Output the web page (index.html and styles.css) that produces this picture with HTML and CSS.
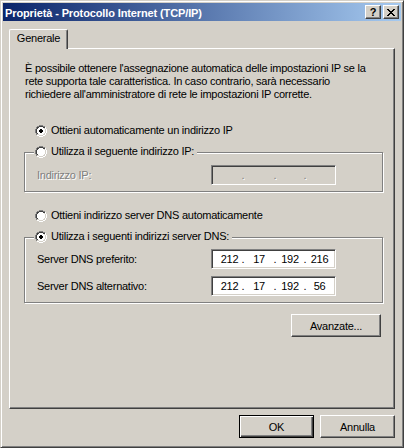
FILE: index.html
```html
<!DOCTYPE html>
<html lang="it">
<head>
<meta charset="utf-8">
<title>Proprietà - Protocollo Internet (TCP/IP)</title>
<link rel="stylesheet" href="styles.css">
</head>
<body>
<svg class="defs" aria-hidden="true">
  <defs>
    <symbol id="radio" viewBox="0 0 12 12">
      <path fill="#808080" d="M4 0h4v1H4z M2 1h2v1H2z M8 1h2v1H8z M1 2h1v2H1z M0 4h1v4H0z M1 8h1v2H1z"/>
      <path fill="#404040" d="M4 1h4v1H4z M2 2h2v1H2z M8 2h2v1H8z M2 3h1v1H2z M1 4h1v4H1z M2 8h1v1H2z"/>
      <path fill="#ffffff" d="M10 2h1v2h-1z M11 4h1v4h-1z M10 8h1v2h-1z M2 10h2v1H2z M8 10h2v1H8z M4 11h4v1H4z"/>
      <path fill="#d4d0c8" d="M9 3h1v1H9z M10 4h1v4h-1z M9 8h1v1H9z M2 9h2v1H2z M8 9h2v1H8z M4 10h4v1H4z"/>
      <path fill="#ffffff" d="M4 2h4v1H4z M3 3h6v1H3z M2 4h8v4H2z M3 8h6v1H3z M4 9h4v1H4z"/>
    </symbol>
    <symbol id="dot" viewBox="0 0 12 12">
      <path fill="#000000" d="M5 4h2v1H5z M4 5h4v2H4z M5 7h2v1H5z"/>
    </symbol>
  </defs>
</svg>
<div class="window">
  <div class="titlebar">
    <span class="title">Proprietà - Protocollo Internet (TCP/IP)</span>
    <div class="caption-buttons">
      <span class="cap-btn help">?</span>
      <span class="cap-btn close">
        <svg width="8" height="7" viewBox="0 0 8 7" shape-rendering="crispEdges">
          <path fill="#000" d="M0 0h2v1H0z M6 0h2v1H6z M1 1h2v1H1z M5 1h2v1H5z M2 2h4v1H2z M3 3h2v1H3z M2 4h4v1H2z M1 5h2v1H1z M5 5h2v1H5z M0 6h2v1H0z M6 6h2v1H6z"/>
        </svg>
      </span>
    </div>
  </div>
  <div class="client">
    <div class="tabs"><div class="tab">Generale</div></div>
    <div class="panel">
      <p class="intro">È possibile ottenere l'assegnazione automatica delle impostazioni IP se la<br>rete supporta tale caratteristica. In caso contrario, sarà necessario<br>richiedere all'amministratore di rete le impostazioni IP corrette.</p>

      <div class="radio r1">
        <svg class="radio-icon" viewBox="0 0 12 12" shape-rendering="crispEdges"><use href="#radio"/><use href="#dot"/></svg>
        <span>Ottieni automaticamente un indirizzo IP</span>
      </div>

      <div class="group g1">
        <div class="legend radio">
          <svg class="radio-icon" viewBox="0 0 12 12" shape-rendering="crispEdges"><use href="#radio"/></svg>
          <span>Utilizza il seguente indirizzo IP:</span>
        </div>
        <div class="field-row first">
          <span class="label disabled">Indirizzo IP:</span>
          <div class="ip ip-disabled">
            <span class="oct"></span><span class="sep">.</span><span class="oct"></span><span class="sep">.</span><span class="oct"></span><span class="sep">.</span><span class="oct"></span>
          </div>
        </div>
      </div>

      <div class="radio r3">
        <svg class="radio-icon" viewBox="0 0 12 12" shape-rendering="crispEdges"><use href="#radio"/></svg>
        <span>Ottieni indirizzo server DNS automaticamente</span>
      </div>

      <div class="group g2">
        <div class="legend radio">
          <svg class="radio-icon" viewBox="0 0 12 12" shape-rendering="crispEdges"><use href="#radio"/><use href="#dot"/></svg>
          <span>Utilizza i seguenti indirizzi server DNS:</span>
        </div>
        <div class="field-row first">
          <span class="label">Server DNS preferito:</span>
          <div class="ip">
            <span class="oct">212</span><span class="sep">.</span><span class="oct">17</span><span class="sep">.</span><span class="oct">192</span><span class="sep">.</span><span class="oct">216</span>
          </div>
        </div>
        <div class="field-row second">
          <span class="label">Server DNS alternativo:</span>
          <div class="ip">
            <span class="oct">212</span><span class="sep">.</span><span class="oct">17</span><span class="sep">.</span><span class="oct">192</span><span class="sep">.</span><span class="oct">56</span>
          </div>
        </div>
      </div>

      <div class="adv-row">
        <button class="btn adv">Avanzate...</button>
      </div>
    </div>
    <div class="buttons">
      <button class="btn default">OK</button>
      <button class="btn">Annulla</button>
    </div>
  </div>
</div>
</body>
</html>
```

FILE: styles.css
```css
* { box-sizing: border-box; }
html, body { margin: 0; padding: 0; }
body {
  background: #d4d0c8;
  font-family: "Liberation Sans", Arial, sans-serif;
  font-size: 11px;
  letter-spacing: -0.25px;
  color: #000;
  width: 404px;
  height: 448px;
  overflow: hidden;
}
.defs { position: absolute; width: 0; height: 0; overflow: hidden; }

.window {
  width: 404px;
  height: 448px;
  border: 1px solid;
  border-color: #d4d0c8 #404040 #404040 #d4d0c8;
  box-shadow: inset 1px 1px #fff, inset -1px -1px #808080;
  padding: 2px;
  display: flex;
  flex-direction: column;
  background: #d4d0c8;
}

.titlebar {
  height: 18px;
  flex: none;
  background: linear-gradient(to right, #0a246a, #a6caf0);
  display: flex;
  align-items: center;
  padding: 0 2px;
}
.title {
  flex: 1;
  color: #fff;
  font-weight: bold;
  font-size: 11px;
  letter-spacing: -0.12px;
  white-space: nowrap;
  padding-top: 1px;
}
.caption-buttons { display: flex; gap: 2px; }
.cap-btn {
  width: 16px;
  height: 14px;
  background: #d4d0c8;
  border: 1px solid;
  border-color: #fff #404040 #404040 #fff;
  box-shadow: inset -1px -1px #808080;
  display: flex;
  align-items: center;
  justify-content: center;
  font-weight: bold;
  font-size: 11px;
  letter-spacing: 0;
  line-height: 1;
  color: #000;
}
.cap-btn svg { display: block; margin-left: -1px; }

.client {
  flex: 1;
  display: flex;
  flex-direction: column;
  padding: 8px 6px 0;
}
.tabs { height: 19px; display: flex; }
.tab {
  position: relative;
  z-index: 1;
  width: 59px;
  height: 20px;
  background: #d4d0c8;
  border-left: 1px solid #fff;
  border-top: 1px solid #fff;
  border-right: 1px solid #404040;
  border-radius: 2px 2px 0 0;
  box-shadow: inset -1px 0 #808080;
  text-align: center;
  line-height: 17px;
}

.panel {
  width: 386px;
  height: 361px;
  border: 1px solid;
  border-color: #fff #404040 #404040 #fff;
  box-shadow: inset -1px -1px #808080;
  padding: 13px 0 0 14px;
}
.intro { margin: 0; line-height: 13px; padding-left: 1px; }

.radio {
  display: flex;
  align-items: center;
  gap: 4px;
  height: 13px;
  line-height: 13px;
}
.radio-icon { width: 12px; height: 12px; flex: none; display: block; }
.r1 { margin: 23px 0 0 11px; }
.r3 { margin: 17px 0 0 11px; }

.group {
  width: 359px;
  border: 1px solid #808080;
  box-shadow: inset 1px 1px #fff, 1px 1px #fff;
  padding: 0 0 6px 12px;
}
.g1 { margin-top: 15px; }
.g2 { margin-top: 15px; }
.legend {
  width: fit-content;
  margin: -8px 0 0 -3px;
  padding: 0 3px 0 1px;
  background: #d4d0c8;
}

.field-row {
  display: grid;
  grid-template-columns: 174px 125px;
  align-items: center;
  height: 20px;
}
.g1 .field-row.first { margin-top: 7px; }
.g2 .field-row.first { margin-top: 6px; }
.field-row.second { margin-top: 7px; }
.disabled { color: #808080; text-shadow: 1px 1px #fff; }

.ip {
  width: 125px;
  height: 20px;
  background: #fff;
  border: 1px solid;
  border-color: #808080 #fff #fff #808080;
  box-shadow: inset 1px 1px #404040, inset -1px -1px #d4d0c8;
  display: grid;
  grid-template-columns: 27px 0 32px 0 30px 0 29px;
  align-items: center;
  padding: 0 0 0 4px;
  line-height: 16px;
}
.oct { text-align: center; }
.sep {
  width: 0;
  display: flex;
  justify-content: center;
}
.ip-disabled { background: #d4d0c8; }
.ip-disabled .sep { color: #808080; text-shadow: 1px 1px #fff; }

.adv-row {
  width: 359px;
  display: flex;
  justify-content: flex-end;
  margin-top: 11px;
  padding-right: 2px;
}

.btn {
  width: 75px;
  height: 23px;
  background: #d4d0c8;
  border: 1px solid;
  border-color: #fff #404040 #404040 #fff;
  box-shadow: inset -1px -1px #808080;
  font-family: inherit;
  font-size: 11px;
  letter-spacing: -0.25px;
  color: #000;
  padding: 0;
  margin: 0;
  border-radius: 0;
}
.btn.adv { width: 90px; }
.btn.default {
  border-color: #000;
  box-shadow: inset 1px 1px #fff, inset -1px -1px #404040, inset -2px -2px #808080;
}
.buttons {
  display: flex;
  justify-content: flex-end;
  gap: 6px;
  margin-top: 6px;
}
```
